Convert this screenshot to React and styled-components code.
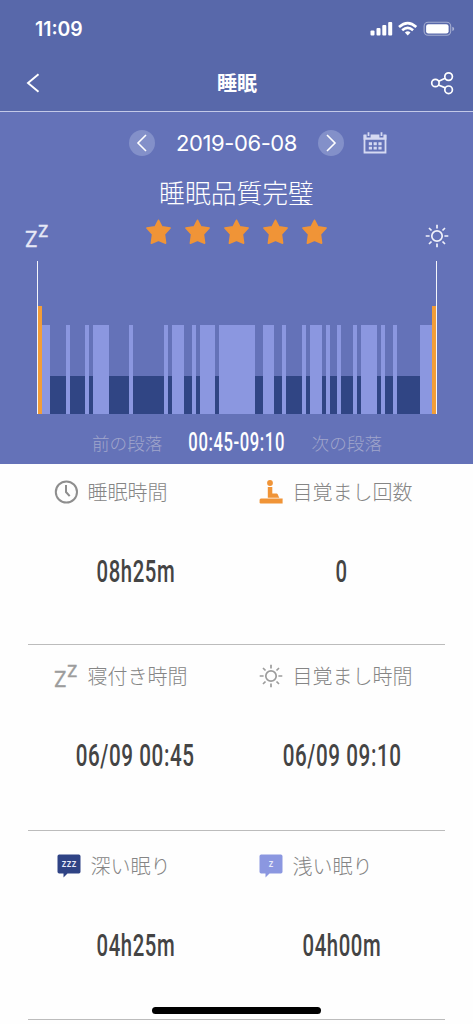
import React from 'react';

import styled, { createGlobalStyle } from 'styled-components';

// [level, span] pairs, the whole night is 101 units wide
const night = [
    ['awake', 1], ['light', 2], ['deep', 4], ['light', 1], ['deep', 4], ['light', 1], ['deep', 1],
    ['light', 4], ['deep', 5], ['light', 1], ['deep', 8], ['light', 1], ['deep', 1], ['light', 3],
    ['deep', 2], ['light', 1], ['deep', 1], ['light', 4], ['deep', 1], ['light', 9], ['deep', 2],
    ['light', 3], ['deep', 2], ['light', 1], ['deep', 4], ['light', 1], ['deep', 1], ['light', 3],
    ['deep', 1], ['light', 1], ['deep', 2], ['light', 1], ['deep', 3], ['light', 1], ['deep', 1],
    ['light', 4], ['deep', 1], ['light', 1], ['deep', 2], ['light', 1], ['deep', 6], ['light', 3],
    ['awake', 1],
];

const levels = {
    awake: { height: 108, color: '#f29d38' },
    light: { height: 89, color: '#8b97e0' },
    deep: { height: 38, color: '#304584' },
};

function ZzIcon({ color }) {
    return (
        <svg width="24" height="24" viewBox="0 0 24 24" fill={color} stroke={color} strokeWidth=".3" fontFamily="Inter, sans-serif">
            <text x="-.3" y="23" fontSize="22" fontWeight="400" textLength="13" lengthAdjust="spacingAndGlyphs">Z</text>
            <text x="13" y="12.6" fontSize="15.500" fontWeight="500" textLength="10.500" lengthAdjust="spacingAndGlyphs">Z</text>
        </svg>
    );
}

function SunIcon({ color }) {
    return (
        <svg width="24" height="24" viewBox="0 0 24 24" fill="none" stroke={color} strokeWidth="1.7">
            <circle cx="12" cy="12" r="5.2" />
            <path d="M12 .7v3.9M12 19.4v3.9M.7 12h3.9M19.4 12h3.9M4 4l2.5 2.5M17.5 17.5L20 20M4 20l2.5-2.5M17.5 6.5L20 4" />
        </svg>
    );
}

function ClockIcon() {
    return (
        <svg width="24" height="24" viewBox="0 0 24 24" fill="none" stroke="#8e8e8e" strokeWidth="2">
            <circle cx="12.4" cy="12" r="10.6" />
            <path d="M12 5v7l3.700 4.200" />
        </svg>
    );
}

function WakeIcon() {
    return (
        <svg width="24" height="24" viewBox="0 0 24 24" fill="#f09437">
            <circle cx="11" cy="3" r="2.9" />
            <path d="M8.8 7h4.5v6.500h4.3c1.6 0 1.9 3.7 3 4.300H8.8z" />
            <path d="M2 18.500h21.600v4.900H1.7Q.6 23.400 .6 22.200V20Q.6 18.500 2 18.500z" />
        </svg>
    );
}

function BubbleIcon({ color, text, width }) {
    return (
        <svg width="24" height="24" viewBox="0 0 24 24">
            <path fill={color} d="M2.200 .5h19.600q1.700 0 1.700 1.700v15.600q0 1.700-1.700 1.700H10.500L6.500 23.500v-4H2.200q-1.700 0-1.700-1.700V2.200Q.5 .5 2.200 .5z" />
            <text x="12" y="13.200" fontSize="11" fontWeight="500" fontFamily="Inter, sans-serif" fill="#e8ebfa" textAnchor="middle" textLength={width} lengthAdjust="spacingAndGlyphs">{text}</text>
        </svg>
    );
}

function Chevron({ flip }) {
    return (
        <svg width="10" height="18" viewBox="0 0 10 18" fill="none" stroke="#fff" strokeWidth="1.6">
            <path d={flip ? 'M1 1l8 8-8 8' : 'M9 1L1 9l8 8'} />
        </svg>
    );
}

function StatusIcons() {
    return (
        <svg width="86" height="16" viewBox="0 0 86 16" fill="#fff">
            <rect x="1.500" y="9.500" width="4" height="5" rx="1" />
            <rect x="7.500" y="7" width="4" height="7.500" rx="1" />
            <rect x="13.300" y="4" width="4" height="10.500" rx="1" />
            <rect x="19.200" y="1" width="4" height="13.500" rx="1" />
            <g fill="none" stroke="#fff" strokeWidth="2.600">
                <path d="M30 6Q38.700 -1.800 47.300 6" />
                <path d="M33.200 9.300Q38.700 4.500 44.100 9.300" />
            </g>
            <path d="M35.900 11.500Q38.700 9.200 41.500 11.500L38.700 14.500z" />
            <rect x="55.100" y="1.300" width="26.600" height="13" rx="4" fill="none" stroke="#fff" strokeOpacity=".45" strokeWidth="1.100" />
            <rect x="57.100" y="3.200" width="22.500" height="9.300" rx="2.300" />
            <path d="M83.300 5.700q1.900.6 1.900 2.200t-1.900 2.200z" fillOpacity=".5" />
        </svg>
    );
}

function App() {
    return (
        <>
            <GlobalStyle />
            <Screen>
                <Header>
                    <StatusBar>
                        <Clock>11:09</Clock>
                        <StatusIcons />
                    </StatusBar>
                    <NavBar>
                        <svg width="14" height="20" viewBox="0 0 14 20" fill="none" stroke="#fff" strokeWidth="1.900">
                            <path d="M12.500 1.200L2 10l10.500 8.800" />
                        </svg>
                        <Title>睡眠</Title>
                        <svg width="24" height="24" viewBox="0 0 24 24" fill="none" stroke="#fff" strokeWidth="1.700">
                            <circle cx="5.400" cy="12" r="3.700" />
                            <circle cx="18.600" cy="5.600" r="3.800" />
                            <circle cx="18.600" cy="18.800" r="3.800" />
                            <path d="M8.700 10.300l6.500-3M8.500 14l6.900 2.900" />
                        </svg>
                    </NavBar>
                </Header>

                <Summary>
                    <DateRow>
                        <Round><Chevron /></Round>
                        <DateText>2019-06-08</DateText>
                        <Round><Chevron flip /></Round>
                        <svg width="24" height="22" viewBox="0 0 24 22" fill="none" stroke="#d5d9f2">
                            <path d="M1.500 3v17.500h21V3" strokeWidth="1.800" />
                            <path d="M.6 2.500h3v3h4v-3h8.800v3h4v-3h3v5.200H.6z" fill="#d5d9f2" stroke="none" />
                            <path d="M5.500 .3v3.600M18.500 .3v3.600" strokeWidth="1.800" />
                            <path d="M5.800 11.700h12.800M5.800 16.100h12.800" strokeWidth="2.900" strokeDasharray="3.200 1.600" />
                        </svg>
                    </DateRow>
                    <Quality>睡眠品質完璧</Quality>
                    <RatingRow>
                        <ZzIcon color="#e6e8f6" />
                        <Stars>
                            {[1, 2, 3, 4, 5].map((n) => (
                                <svg key={n} width="26" height="26" viewBox="0 0 26 26" fill="#f09437" stroke="#f09437" strokeWidth="1.600" strokeLinejoin="round">
                                    <path d="M12.500 1.300l3.400 6.600 8.200 1.100-5.700 6.300 1.200 8.900-7.100-3-7.100 3 1.200-8.900L.9 9l8.200-1.100z" />
                                </svg>
                            ))}
                        </Stars>
                        <SunIcon color="#f0f1fa" />
                    </RatingRow>
                    <Chart>
                        {night.map(([level, span], i) => (
                            <Bar key={i} $level={levels[level]} $span={span} />
                        ))}
                    </Chart>
                    <Segments>
                        <Segment>前の段落</Segment>
                        <Period><Narrow $scale={0.665}>00:45-09:10</Narrow></Period>
                        <Segment>次の段落</Segment>
                    </Segments>
                </Summary>

                <StatRow $height={181} $top={16}>
                    <Stat $indent={26}>
                        <Label><ClockIcon />睡眠時間</Label>
                        <Value><Narrow>08h25m</Narrow></Value>
                    </Stat>
                    <Stat $indent={16}>
                        <Label><WakeIcon />目覚まし回数</Label>
                        <Value><Narrow>0</Narrow></Value>
                    </Stat>
                </StatRow>
                <StatRow $height={186} $top={19}>
                    <Stat $indent={26}>
                        <Label><ZzIcon color="#9c9c9c" />寝付き時間</Label>
                        <Value><Narrow $scale={0.645}>06/09 00:45</Narrow></Value>
                    </Stat>
                    <Stat $indent={16}>
                        <Label><SunIcon color="#9c9c9c" />目覚まし時間</Label>
                        <Value><Narrow $scale={0.645}>06/09 09:10</Narrow></Value>
                    </Stat>
                </StatRow>
                <StatRow $height={189} $top={23}>
                    <Stat $indent={29}>
                        <Label><BubbleIcon color="#2f4385" text="zzz" width={15} />深い眠り</Label>
                        <Value><Narrow>04h25m</Narrow></Value>
                    </Stat>
                    <Stat $indent={16}>
                        <Label><BubbleIcon color="#8b97e0" text="z" width={5} />浅い眠り</Label>
                        <Value><Narrow>04h00m</Narrow></Value>
                    </Stat>
                </StatRow>
                <HomeBar />
            </Screen>
        </>
    );
}

const GlobalStyle = createGlobalStyle`
    * {
        box-sizing: border-box;
    }
    body {
        margin: 0;
        background: #fefefe;
        font-family: 'Noto Sans CJK JP', sans-serif;
    }
    svg {
        display: block;
        flex: none;
        overflow: visible;
    }
`

const Screen = styled.main`
    position: relative;
    width: 473px;
    height: 1024px;
    overflow: hidden;
    background: #fefefe;
`

const Header = styled.header`
    height: 112px;
    background: #5868aa;
    border-bottom: 1px solid #c3c9e8;
    color: #fff;
`

const StatusBar = styled.div`
    height: 58px;
    padding: 0 18px 0 35px;
    display: flex;
    align-items: center;
    justify-content: space-between;
`

const Clock = styled.span`
    font-family: Inter, sans-serif;
    font-size: 19.4px;
    font-weight: 600;
`

const NavBar = styled.nav`
    height: 50px;
    padding: 0 19px 0 26px;
    display: grid;
    grid-template-columns: 18px 1fr 24px;
    align-items: center;
`

const Title = styled.h1`
    margin: 0;
    font-size: 20px;
    line-height: 24px;
    font-weight: 700;
    text-align: center;
`

const Summary = styled.section`
    height: 352px;
    background: #6472b8;
    color: #fff;
`

const DateRow = styled.div`
    height: 62px;
    padding-left: 129px;
    display: flex;
    align-items: center;
    > svg {
        margin-left: 19px;
    }
`

const Round = styled.button`
    width: 26px;
    height: 26px;
    padding: 0;
    border: none;
    border-radius: 50%;
    background: #8390c9;
    display: flex;
    align-items: center;
    justify-content: center;
`

const DateText = styled.span`
    width: 163px;
    font-family: Inter, sans-serif;
    font-size: 22px;
    letter-spacing: -0.4px;
    text-align: center;
`

const Quality = styled.h2`
    margin: 0;
    height: 38px;
    font-size: 25.8px;
    line-height: 36px;
    font-weight: 300;
    text-align: center;
`

const RatingRow = styled.div`
    height: 36px;
    padding: 0 24px 0 25px;
    display: flex;
    align-items: flex-end;
    justify-content: space-between;
`

const Stars = styled.div`
    display: flex;
    gap: 13px;
    margin-bottom: 3px;
`

const Chart = styled.div`
    height: 153px;
    width: 400px;
    margin: 13px 0 0 37px;
    border: solid #f4f5fb;
    border-width: 0 1.500px;
    display: flex;
    align-items: flex-end;
`

const Bar = styled.div`
    flex: ${({ $span }) => $span} 0 0;
    height: ${({ $level }) => $level.height}px;
    background: ${({ $level }) => $level.color};
`

const Segments = styled.div`
    height: 50px;
    padding: 6px 91px 0 92px;
    display: flex;
    align-items: center;
    justify-content: space-between;
`

const Segment = styled.span`
    font-size: 17.6px;
    font-weight: 300;
    color: #a0a5cb;
`

const Period = styled.span`
    width: 96px;
    padding-top: 1px;
    display: flex;
    justify-content: center;
    font-size: 25px;
`

// Roboto squeezed into a DIN-like condensed face
const Narrow = styled.span`
    flex: none;
    font-family: Roboto, sans-serif;
    font-weight: 500;
    letter-spacing: 0.9px;
    white-space: nowrap;
    transform: scaleX(${({ $scale }) => $scale || 0.635});
`

const StatRow = styled.section`
    height: ${({ $height }) => $height}px;
    margin: 0 28px;
    padding-top: ${({ $top }) => $top}px;
    border-bottom: 1px solid #bcbcbc;
    display: grid;
    grid-template-columns: 215px 198px;
    align-items: start;
`

const Stat = styled.div`
    > div:first-child {
        padding-left: ${({ $indent }) => $indent}px;
    }
`

const Label = styled.div`
    height: 24px;
    display: flex;
    align-items: center;
    gap: 9.6px;
    font-size: 20px;
    font-weight: 300;
    line-height: 24px;
    color: #858585;
`

const Value = styled.div`
    height: 40px;
    margin-top: 47px;
    display: flex;
    align-items: center;
    justify-content: center;
    font-size: 32px;
    color: #444;
`

const HomeBar = styled.div`
    position: absolute;
    left: 152px;
    bottom: 10px;
    width: 169px;
    height: 7px;
    border-radius: 4px;
    background: #000;
`

export default App;
